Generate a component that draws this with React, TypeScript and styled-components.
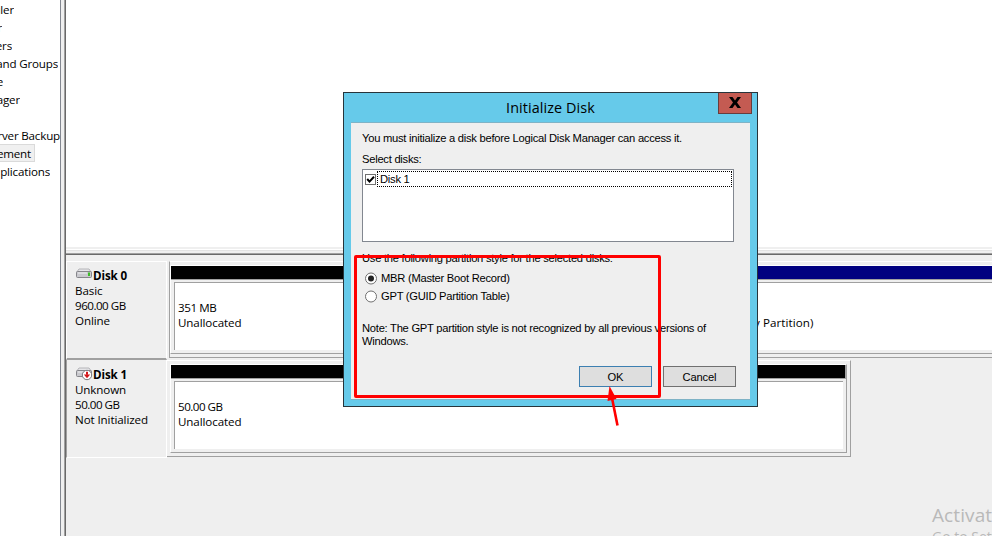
import React from "react";
import styled, { createGlobalStyle, css } from "styled-components";

const Global = createGlobalStyle`
  * { box-sizing: border-box; }
  body { margin: 0; overflow: hidden; background: #efefef; }
`;

const uiFont = css`
  font-family: "Open Sans", "Noto Sans", sans-serif;
  font-size: 11.6px;
  letter-spacing: -0.1px;
  color: #000;
  white-space: nowrap;
`;

const Screen = styled.div`
  position: relative;
  display: flex;
  width: 992px;
  height: 536px;
  overflow: hidden;
  background: #efefef;
`;

/* ---------- console tree ---------- */
const Tree = styled.nav`
  ${uiFont}
  width: 61px;
  flex: none;
  background: #fff;
  border-right: 1px solid #828790;
  overflow: hidden;
`;

const TreeItem = styled.div<{ $end: number; $selected?: boolean }>`
  display: flex;
  justify-content: flex-end;
  align-items: center;
  height: 18px;
  width: ${(p) => p.$end}px;
  overflow: hidden;
  letter-spacing: -0.18px;
  ${(p) =>
    p.$selected &&
    css`
      background: #f0f0f0;
      border: 1px solid #dadada;
      border-left: 0;
      padding-right: 3px;
    `}
`;

const Splitter = styled.div`
  flex: none;
  width: 5px;
  background: #efefef;
  border-right: 1px solid #696969;
  box-shadow: inset -1px 0 #a0a0a0;
`;

/* ---------- disk view ---------- */
const Main = styled.main`
  flex: 1;
  min-width: 0;
  display: flex;
  flex-direction: column;
`;

const VolumeList = styled.div`
  height: 247px;
  background: #fff;
`;

const HorizontalSplitter = styled.div`
  height: 8px;
  border-bottom: 1px solid #696969;
  background: linear-gradient(#efefef 2px, #fff 2px 3px, #e3e3e3 3px 4px, #efefef 4px 6px, #a0a0a0 6px);
`;

const DiskRow = styled.section<{ $width: number; $top: number }>`
  display: flex;
  width: ${(p) => p.$width}px;
  margin-top: ${(p) => p.$top}px;
  height: 97px;
`;

const DiskLabel = styled.div<{ $first?: boolean }>`
  ${uiFont}
  flex: none;
  width: 101px;
  height: ${(p) => (p.$first ? 99 : 98)}px;
  padding: ${(p) => (p.$first ? 6 : 7)}px 0 0 8px;
  line-height: 15px;
  border-right: 1px solid #fff;
  border-left: 1px solid ${(p) => (p.$first ? "#fff" : "#a0a0a0")};
  border-top: ${(p) => (p.$first ? "1px solid #fff" : "0")};
  border-bottom: ${(p) => (p.$first ? "2px solid #a0a0a0" : "1px solid #fff")};
`;

const DiskName = styled.div`
  display: flex;
  font-weight: 700;
  height: 15px;
`;

const Size = styled.div<{ $tight?: boolean }>`
  letter-spacing: ${(p) => (p.$tight ? -0.5 : -0.4)}px;
`;

const PartitionFrame = styled.div<{ $open?: boolean }>`
  flex: 1;
  min-width: 0;
  margin-left: ${(p) => (p.$open ? 2 : 0)}px;
  height: 97px;
  border-top: 1px solid #fff;
  border-bottom: 1px solid #a0a0a0;
  border-left: ${(p) => (p.$open ? "1px solid #a0a0a0" : "0")};
  border-right: ${(p) => (p.$open ? "0" : "1px solid #a0a0a0")};
  padding: ${(p) => (p.$open ? "3px 0 0 0" : "3px 3px 0 3px")};
`;

const PartitionInner = styled.div<{ $open?: boolean }>`
  height: 89px;
  border-top: 1px solid #fff;
  border-left: 1px solid #fff;
  border-bottom: 1px solid #a0a0a0;
  border-right: ${(p) => (p.$open ? "0" : "1px solid #a0a0a0")};
`;

const Stripe = styled.div<{ $open?: boolean }>`
  display: flex;
  height: 14px;
  border-bottom: 1px solid #a0a0a0;
  border-right: ${(p) => (p.$open ? "0" : "1px solid #a0a0a0")};
`;

const StripePart = styled.div<{ $width?: number; $color: string }>`
  background: ${(p) => p.$color};
  ${(p) => (p.$width ? `width: ${p.$width}px` : "flex: 1")};
`;

const PartitionBody = styled.div<{ $open?: boolean }>`
  ${uiFont}
  display: flex;
  align-items: flex-start;
  margin: 2px ${(p) => (p.$open ? 0 : 3)}px 0 3px;
  height: 68px;
  padding: 17px 0 0 3px;
  line-height: 15px;
  background: #fff;
  border-top: 1px solid #a0a0a0;
  border-left: 1px solid #a0a0a0;
`;

const PartitionText = styled.div`
  width: 576px;
  flex: none;
`;

const PartitionTail = styled.div`
  padding-top: 15px;
  letter-spacing: 0.08px;
`;

const Watermark = styled.div`
  position: absolute;
  left: 932px;
  top: 503px;
  font-family: "Open Sans", sans-serif;
  white-space: nowrap;
  color: #b9b9b9;
`;
const WatermarkTitle = styled.div`
  font-size: 19px;
  line-height: 25px;
  letter-spacing: 0.1px;
`;
const WatermarkText = styled.div`
  font-size: 14px;
  line-height: 18px;
`;

/* ---------- dialog ---------- */
const Dialog = styled.div`
  position: absolute;
  left: 343px;
  top: 92px;
  width: 415px;
  height: 315px;
  border: 1px solid #27343b;
  background: #66caea;
  padding: 0 7px 0 7px;
  font-family: "Liberation Sans", Arial, sans-serif;
  font-size: 11.2px;
  letter-spacing: -0.26px;
  color: #000;
  white-space: nowrap;
`;

const TitleBar = styled.header`
  display: flex;
  height: 29px;
`;

const Title = styled.h1`
  margin: 0;
  flex: 1;
  padding-left: 32px;
  text-align: center;
  font: 400 14.4px/29px "Open Sans", sans-serif;
  letter-spacing: 0.08px;
`;

const Close = styled.button`
  width: 34px;
  height: 21px;
  margin-right: -2px;
  padding: 0 0 2px;
  border: 1px solid #683c3c;
  border-top: 0;
  background: #c45b52;
  display: flex;
  align-items: center;
  justify-content: center;
`;

const Content = styled.div`
  height: 278px;
  border-top: 1px solid #7fb3c6;
  border-bottom: 1px solid #7fb3c6;
  background: #efefef;
  padding: 8px 14px 0 11px;
`;

const Line = styled.p<{ $top?: number; $height?: number }>`
  margin: ${(p) => p.$top ?? 0}px 0 0;
  height: ${(p) => p.$height ?? 14}px;
  line-height: 14px;
`;

const ListBox = styled.div`
  width: 372px;
  height: 73px;
  margin-top: 3px;
  padding: 1px;
  background: #fff;
  border: 1px solid #828790;
`;

const ListItem = styled.div`
  display: flex;
  align-items: flex-start;
`;

const CheckBox = styled.span`
  width: 11px;
  height: 11px;
  margin: 3px 1px 0 1px;
  border: 1px solid #707070;
  display: flex;
`;

const FocusRow = styled.span`
  flex: none;
  width: 355px;
  height: 16px;
  border: 1px dotted #000;
  line-height: 14px;
  padding-left: 2px;
`;

const Radio = styled.label<{ $top: number }>`
  display: flex;
  align-items: center;
  gap: 4px;
  height: 14px;
  margin: ${(p) => p.$top}px 0 0 2px;
`;

const Buttons = styled.div`
  display: flex;
  justify-content: flex-end;
  gap: 11px;
  margin: 18px 0 0;
`;

const Button = styled.button<{ $primary?: boolean }>`
  width: 73px;
  height: 21px;
  padding: 0;
  border: 1px solid ${(p) => (p.$primary ? "#3c7fb1" : "#707070")};
  background: #dedede;
  font: inherit;
  letter-spacing: -0.15px;
  color: #000;
`;

const Annotation = styled.svg`
  position: absolute;
  left: 354px;
  top: 255px;
`;

const DriveIcon = styled.svg`
  flex: none;
  width: 17px;
  height: 15px;
  margin: -1px 0 0 1px;
`;

function Drive({ warn }: { warn?: boolean }) {
  return (
    <DriveIcon viewBox="0 0 17 15">
      <path d="M3 2h10l2.500 3.500H0.500z" fill="#e6e6e9" stroke="#b4b4b8" />
      <rect x="0.500" y="4.500" width="15" height="6" rx="1" fill="#c9c9ce" stroke="#85858a" />
      <path d="M2 6h9" stroke="#efeff1" />
      {warn ? (
        <>
          <circle cx="11" cy="9" r="4.700" fill="#fff" stroke="#77777c" />
          <path d="M11 5.800v3" fill="none" stroke="#d21518" strokeWidth="2" />
          <path d="M7.800 8.500h6.400L11 12.300z" fill="#d21518" />
        </>
      ) : (
        <rect x="12" y="5.500" width="2" height="3.500" fill="#3dbb28" />
      )}
    </DriveIcon>
  );
}

function RadioMark({ on }: { on?: boolean }) {
  return (
    <svg width="13" height="13" viewBox="0 0 13 13">
      <circle cx="7" cy="6.500" r="5.500" fill="#fff" stroke="#707070" />
      {on && <circle cx="7" cy="6.500" r="3" fill="#222" />}
    </svg>
  );
}

const tree = [
  { text: "uler", end: 14 },
  { text: "r", end: 2 },
  { text: "ers", end: 12 },
  { text: "and Groups", end: 58 },
  { text: "e", end: 3 },
  { text: "ager", end: 20 },
  { text: "", end: 20 },
  { text: "rver Backup", end: 60 },
  { text: "ement", end: 35, selected: true },
  { text: "plications", end: 50 },
];

export default function App() {
  return (
    <>
      <Global />
      <Screen>
        <Tree>
          {tree.map((t, i) => (
            <TreeItem key={i} $end={t.end} $selected={t.selected}>
              {t.text}
            </TreeItem>
          ))}
        </Tree>
        <Splitter />
        <Main>
          <VolumeList />
          <HorizontalSplitter />
          <DiskRow $width={926} $top={6}>
            <DiskLabel $first>
              <DiskName>
                <Drive />
                Disk 0
              </DiskName>
              Basic
              <Size $tight>960.00 GB</Size>
              Online
            </DiskLabel>
            <PartitionFrame $open>
              <PartitionInner $open>
                <Stripe $open>
                  <StripePart $color="#000" $width={250} />
                  <StripePart $color="#000080" />
                </Stripe>
                <PartitionBody $open>
                  <PartitionText>
                    <Size>351 MB</Size>
                    Unallocated
                  </PartitionText>
                  <PartitionTail>y Partition)</PartitionTail>
                </PartitionBody>
              </PartitionInner>
            </PartitionFrame>
          </DiskRow>
          <DiskRow $width={785} $top={2}>
            <DiskLabel>
              <DiskName>
                <Drive warn />
                Disk 1
              </DiskName>
              Unknown
              <Size $tight>50.00 GB</Size>
              Not Initialized
            </DiskLabel>
            <PartitionFrame>
              <PartitionInner>
                <Stripe>
                  <StripePart $color="#000" />
                </Stripe>
                <PartitionBody>
                  <PartitionText>
                    <Size $tight>50.00 GB</Size>
                    Unallocated
                  </PartitionText>
                </PartitionBody>
              </PartitionInner>
            </PartitionFrame>
          </DiskRow>
        </Main>

        <Watermark>
          <WatermarkTitle>Activate Windows</WatermarkTitle>
          <WatermarkText>Go to Settings</WatermarkText>
        </Watermark>

        <Dialog>
          <TitleBar>
            <Title>Initialize Disk</Title>
            <Close aria-label="Close">
              <svg width="12" height="11" viewBox="0 0 12 11">
                <path d="M0 0h3.500L6 3.500 8.500 0H12L8 5.500l4 5.500H8.500L6 7.500 3.500 11H0l4-5.500z" fill="#000" />
              </svg>
            </Close>
          </TitleBar>
          <Content>
            <Line>You must initialize a disk before Logical Disk Manager can access it.</Line>
            <Line $top={7}>Select disks:</Line>
            <ListBox>
              <ListItem>
                <CheckBox>
                  <svg width="9" height="9" viewBox="0 0 9 9">
                    <path d="M1.200 4l2.300 2.600L8 1.700" fill="none" stroke="#000" strokeWidth="2" />
                  </svg>
                </CheckBox>
                <FocusRow>Disk 1</FocusRow>
              </ListItem>
            </ListBox>
            <Line $top={9}>Use the following partition style for the selected disks:</Line>
            <Radio $top={6}>
              <RadioMark on />
              MBR (Master Boot Record)
            </Radio>
            <Radio $top={4}>
              <RadioMark />
              GPT (GUID Partition Table)
            </Radio>
            <Line $top={18} $height={13}>
              Note: The GPT partition style is not recognized by all previous versions of
            </Line>
            <Line>Windows.</Line>
            <Buttons>
              <Button $primary>OK</Button>
              <Button>Cancel</Button>
            </Buttons>
          </Content>
        </Dialog>

        <Annotation width="308" height="175" viewBox="0 0 308 175">
          <rect x="1.500" y="1.500" width="304" height="140" rx="0.500" fill="none" stroke="#f00" strokeWidth="3" />
          <path d="M263.500 170.500L258 143" stroke="#f00" strokeWidth="2.600" />
          <path d="M255.500 131l7 13-9 2z" fill="#f00" />
        </Annotation>
      </Screen>
    </>
  );
}
